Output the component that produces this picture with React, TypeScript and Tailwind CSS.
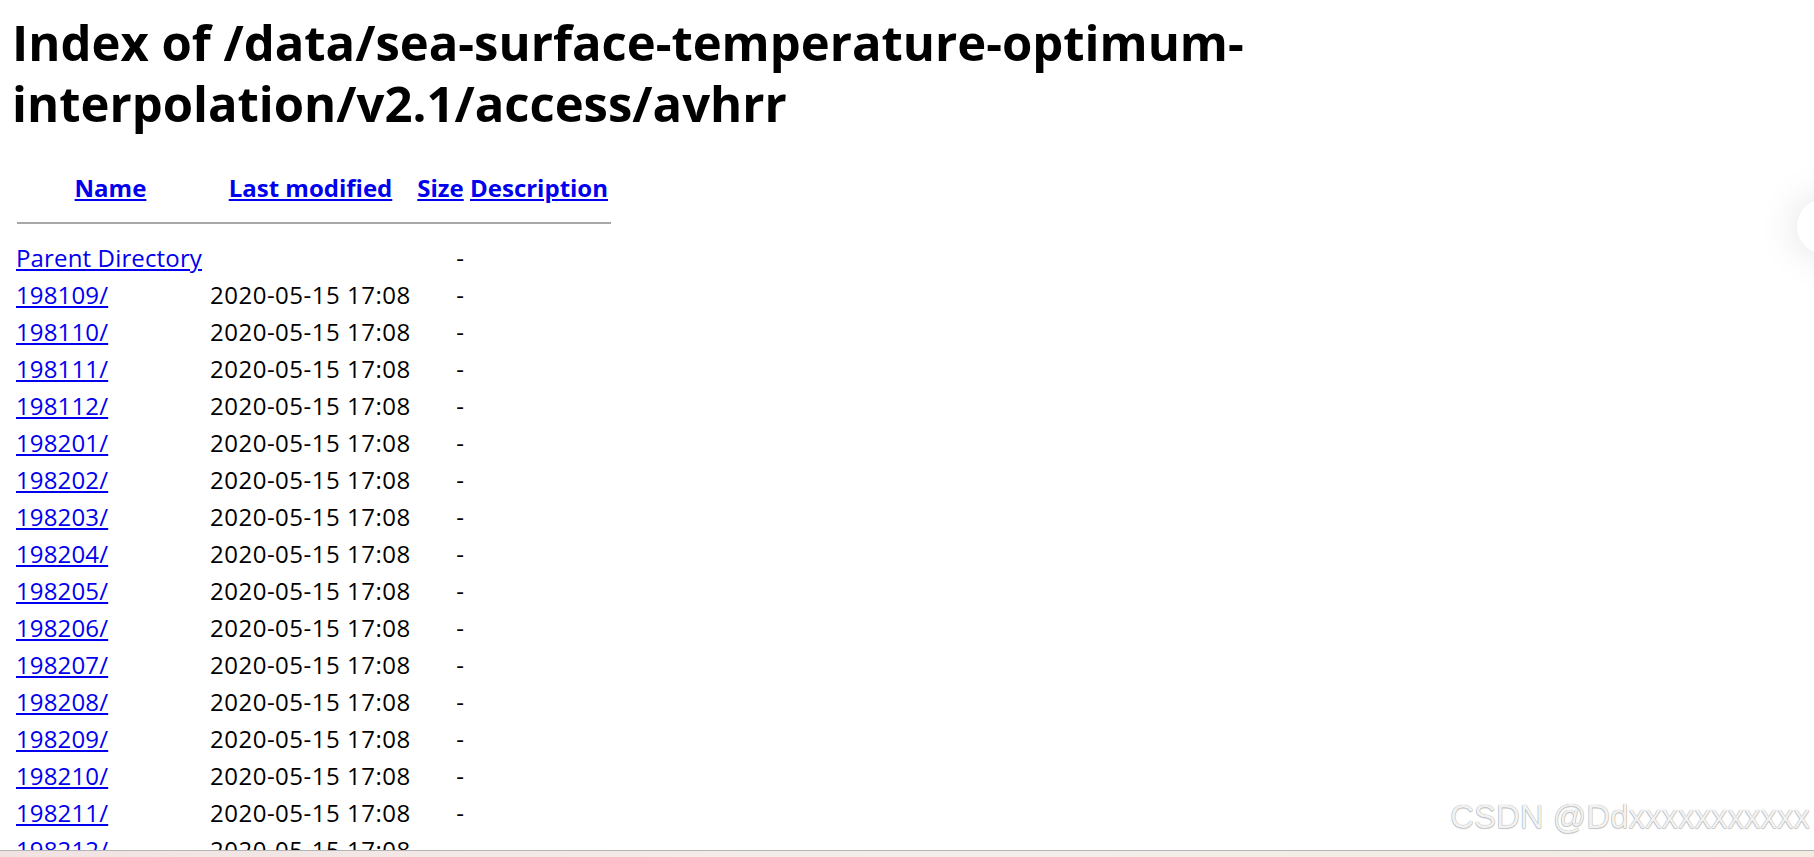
import React from "react";

type Entry = {
  name: string;
  modified: string;
  size: string;
};

const MONTHS = [
  "198109",
  "198110",
  "198111",
  "198112",
  "198201",
  "198202",
  "198203",
  "198204",
  "198205",
  "198206",
  "198207",
  "198208",
  "198209",
  "198210",
  "198211",
  "198212",
];

const ENTRIES: Entry[] = [
  { name: "Parent Directory", modified: "", size: "-" },
  ...MONTHS.map((m) => ({ name: `${m}/`, modified: "2020-05-15 17:08", size: "-" })),
];

const linkCls = "text-[#0000ee] underline";

export default function App() {
  return (
    <div className="relative flex h-[857px] w-full flex-col overflow-hidden bg-white font-['Open_Sans',sans-serif] text-black">
      <div className="min-h-0 flex-1 overflow-hidden px-[12px] pt-[12px]">
        <h1 className="text-[49px] font-bold leading-[61px]">
          Index of /data/sea-surface-temperature-optimum-
          <br />
          interpolation/v2.1/access/avhrr
        </h1>

        <table className="ml-[2px] mt-[35px] border-collapse text-[24px] leading-[37px]">
          <thead>
            <tr className="h-[37px]">
              <th className="w-[193px] p-0 text-center font-bold">
                <a href="#" className={linkCls}>Name</a>
              </th>
              <th className="w-[207px] p-0 text-center font-bold">
                <a href="#" className={linkCls}>Last modified</a>
              </th>
              <th className="w-[53px] p-0 text-center font-bold">
                <a href="#" className={linkCls}>Size</a>
              </th>
              <th className="w-[144px] p-0 text-center font-bold">
                <a href="#" className={linkCls}>Description</a>
              </th>
            </tr>
            <tr className="h-[33px]">
              <th colSpan={4} className="p-0 pl-[3px] align-top">
                <hr className="mt-[16px] border-0 border-t-2 border-[#a8a8a8]" />
              </th>
            </tr>
          </thead>
          <tbody>
            {ENTRIES.map((e) => (
              <tr key={e.name} className="h-[37px]">
                <td className="whitespace-nowrap p-0 pl-[2px] tracking-[0.15px]">
                  <a href="#" className={linkCls}>{e.name}</a>
                </td>
                <td className="whitespace-nowrap p-0 pl-[3px] tracking-[0.5px]">{e.modified}</td>
                <td className="p-0 pr-[3px] text-right">{e.size}</td>
                <td className="p-0">&nbsp;</td>
              </tr>
            ))}
          </tbody>
        </table>
      </div>

      <div className="h-[7px] shrink-0 border-t border-[#b5b5b5] bg-gradient-to-r from-[#f2e3e3] via-[#f3eeea] to-[#f2ece3]" />

      {/* floating button half off screen */}
      <div className="absolute right-[-38px] top-[199px] h-[55px] w-[55px] rounded-full bg-white shadow-[0_0_40px_rgba(0,0,0,0.13)]" />

      <div className="absolute right-[4px] top-[800px] whitespace-nowrap font-['Liberation_Sans',sans-serif] text-[33px] leading-[33px] text-[#f2f2f2] [text-shadow:0_0_1px_rgba(0,0,0,0.45),0_1px_1px_rgba(0,0,0,0.2)]">
        CSDN @Ddxxxxxxxxxxx
      </div>
    </div>
  );
}
